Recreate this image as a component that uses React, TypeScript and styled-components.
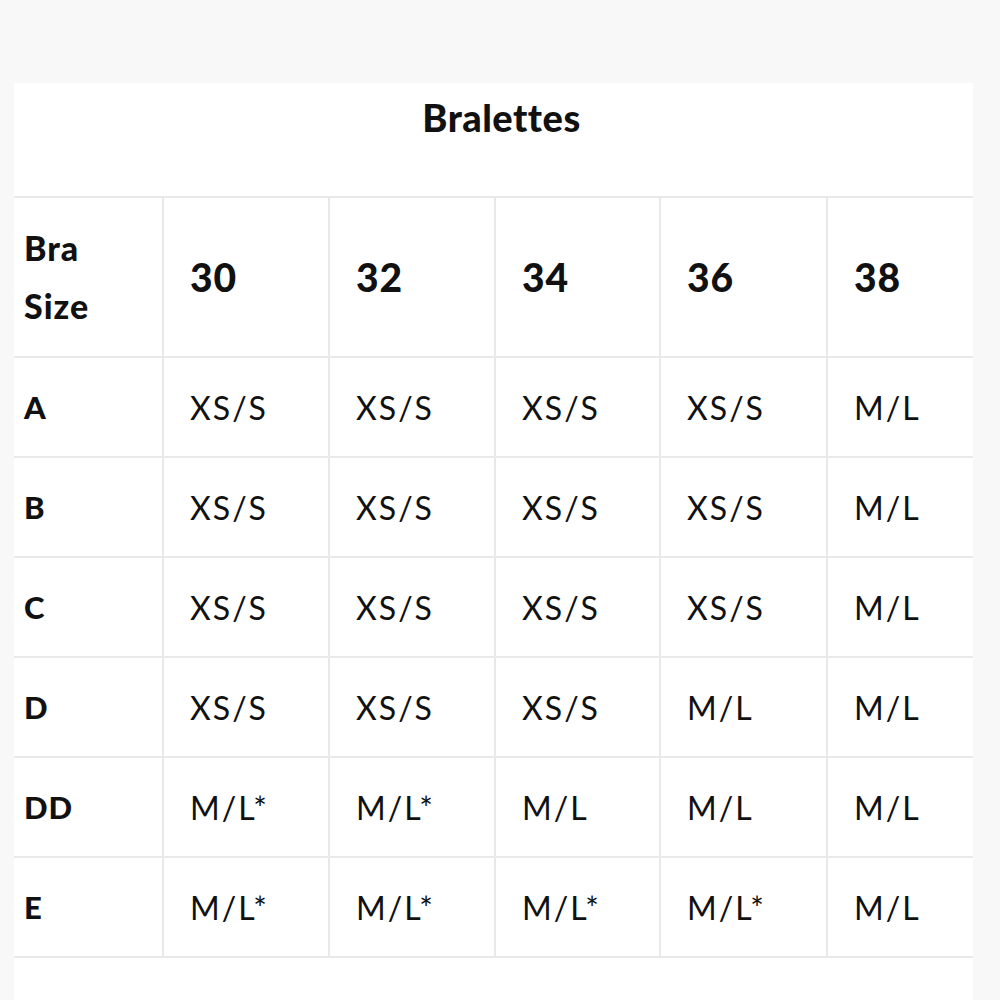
import React from 'react';
import styled, { createGlobalStyle } from 'styled-components';

const GlobalStyle = createGlobalStyle`
  html, body {
    margin: 0;
    padding: 0;
    background: #f8f8f8;
  }
  body {
    font-family: Lato, 'Liberation Sans', sans-serif;
    color: #111;
  }
`;

const Page = styled.div`
  padding: 83px 27px 0 14px;
  height: 1000px;
  box-sizing: border-box;
  overflow: hidden;
`;

const Panel = styled.div`
  width: 959px;
  height: 917px;
  background: #fff;
`;

const Title = styled.h1`
  margin: 0;
  height: 113px;
  box-sizing: border-box;
  display: flex;
  justify-content: center;
  padding: 12px 0 0 16px;
  font-size: 38px;
  line-height: 44px;
  font-weight: 900;
  letter-spacing: 0.5px;
`;

const Grid = styled.div`
  display: grid;
  grid-template-columns: 150px 166px 166px 165px 167px 145px;
  border-top: 2px solid #e9e9e9;
`;

const Cell = styled.div<{ $head?: boolean; $last?: boolean }>`
  box-sizing: border-box;
  height: ${(p) => (p.$head ? '160px' : '100px')};
  display: flex;
  align-items: center;
  padding-left: 26px;
  border-bottom: 2px solid #e9e9e9;
  border-right: ${(p) => (p.$last ? 'none' : '2px solid #e9e9e9')};
  font-size: 32px;
  font-weight: 400;
  letter-spacing: 2px;
`;

const LabelCell = styled(Cell)`
  padding-left: 10px;
  font-weight: 900;
  font-size: 31px;
  letter-spacing: 1px;
`;

const SizeLabel = styled.span`
  font-size: 34px;
  line-height: 58px;
`;

const HeadNum = styled.span`
  font-size: 39px;
  font-weight: 900;
  letter-spacing: 1px;
`;

const bands = ['30', '32', '34', '36', '38'];

const rows: [string, string[]][] = [
  ['A', ['XS/S', 'XS/S', 'XS/S', 'XS/S', 'M/L']],
  ['B', ['XS/S', 'XS/S', 'XS/S', 'XS/S', 'M/L']],
  ['C', ['XS/S', 'XS/S', 'XS/S', 'XS/S', 'M/L']],
  ['D', ['XS/S', 'XS/S', 'XS/S', 'M/L', 'M/L']],
  ['DD', ['M/L*', 'M/L*', 'M/L', 'M/L', 'M/L']],
  ['E', ['M/L*', 'M/L*', 'M/L*', 'M/L*', 'M/L']],
];

export default function App() {
  return (
    <Page>
      <GlobalStyle />
      <Panel>
        <Title>Bralettes</Title>
        <Grid>
          <LabelCell $head>
            <SizeLabel>
              Bra
              <br />
              Size
            </SizeLabel>
          </LabelCell>
          {bands.map((b, i) => (
            <Cell key={b} $head $last={i === bands.length - 1}>
              <HeadNum>{b}</HeadNum>
            </Cell>
          ))}
          {rows.map(([cup, sizes]) => (
            <React.Fragment key={cup}>
              <LabelCell>{cup}</LabelCell>
              {sizes.map((s, i) => (
                <Cell key={i} $last={i === sizes.length - 1}>
                  {s}
                </Cell>
              ))}
            </React.Fragment>
          ))}
        </Grid>
      </Panel>
    </Page>
  );
}
